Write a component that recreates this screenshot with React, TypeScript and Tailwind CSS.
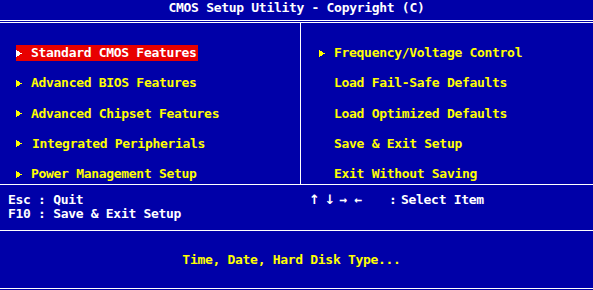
import React from "react";

const font = { fontFamily: '"DejaVu Sans Mono", "Liberation Mono", monospace' };

function Arrow({ color }: { color: string }) {
  return (
    <span className="flex w-[15px] shrink-0 items-center">
      <svg width="6" height="7" viewBox="0 0 6 7" shapeRendering="crispEdges">
        <polygon points="0,0 6,3.5 0,7" fill={color} />
      </svg>
    </span>
  );
}

const left = [
  "Standard CMOS Features",
  "Advanced BIOS Features",
  "Advanced Chipset Features",
  "Integrated Peripherials",
  "Power Management Setup",
];
const right = [
  { t: "Frequency/Voltage Control", arrow: true },
  { t: "Load Fail-Safe Defaults", arrow: false },
  { t: "Load Optimized Defaults", arrow: false },
  { t: "Save & Exit Setup", arrow: false },
  { t: "Exit Without Saving", arrow: false },
];

export default function App() {
  return (
    <div
      className="w-[593px] h-[290px] bg-[#0000a8] flex flex-col overflow-hidden font-bold text-[13px] tracking-[-0.3px] whitespace-pre"
      style={font}
    >
      {/* title */}
      <div className="h-[20px] flex justify-center pt-[1px] leading-[14px] text-white">
        CMOS Setup Utility - Copyright (C)
      </div>
      <div className="h-px bg-white" />
      <div className="h-px" />
      <div className="h-px bg-white" />

      {/* main */}
      <div className="h-[161px] flex">
        <div className="w-[300px] flex flex-col pt-[22px] pl-[16px] gap-[14.25px]">
          {left.map((t, i) => (
            <div key={t} className="h-4 flex">
              <div
                className={
                  i === 0
                    ? "flex items-center bg-[#e80000] text-white pr-[1px] leading-4"
                    : "flex items-center text-[#ffff00] leading-4"
                }
              >
                <Arrow color={i === 0 ? "#ffffff" : "#ffff00"} />
                <span className={i === 3 ? "pl-[1px]" : ""}>{t}</span>
              </div>
            </div>
          ))}
        </div>
        <div className="w-px bg-white" />
        <div className="flex-1 flex flex-col pt-[22px] pl-[18px] gap-[14.25px]">
          {right.map((r) => (
            <div key={r.t} className="h-4 flex items-center text-[#ffff00] leading-4">
              {r.arrow ? <Arrow color="#ffff00" /> : <span className="w-[15px] shrink-0" />}
              <span>{r.t}</span>
            </div>
          ))}
        </div>
      </div>
      <div className="h-px bg-white" />

      {/* help */}
      <div className="h-[45px] flex text-white leading-[14px] pt-[8px]">
        <div className="w-[302px] pl-[8px] flex flex-col">
          <span>Esc : Quit</span>
          <span>F10 : Save &amp; Exit Setup</span>
        </div>
        <div className="flex pl-[7px]">
          <span className="w-[80px] flex">
            <span className="w-[15.5px]" style={{ fontFamily: '"DejaVu Sans", sans-serif' }}>↑</span>
            <span className="w-[15px]" style={{ fontFamily: '"DejaVu Sans", sans-serif' }}>↓</span>
            <span className="w-[15px]">→</span>
            <span>←</span>
          </span>
          <span className="w-[12px]">:</span>
          <span>Select Item</span>
        </div>
      </div>
      <div className="h-px bg-white" />

      {/* status */}
      <div className="h-[57px] flex justify-center pr-[10px] pt-[21px] leading-4 text-[#ffff00]">
        Time, Date, Hard Disk Type...
      </div>
      <div className="h-px bg-white" />
      <div className="h-px" />
    </div>
  );
}
